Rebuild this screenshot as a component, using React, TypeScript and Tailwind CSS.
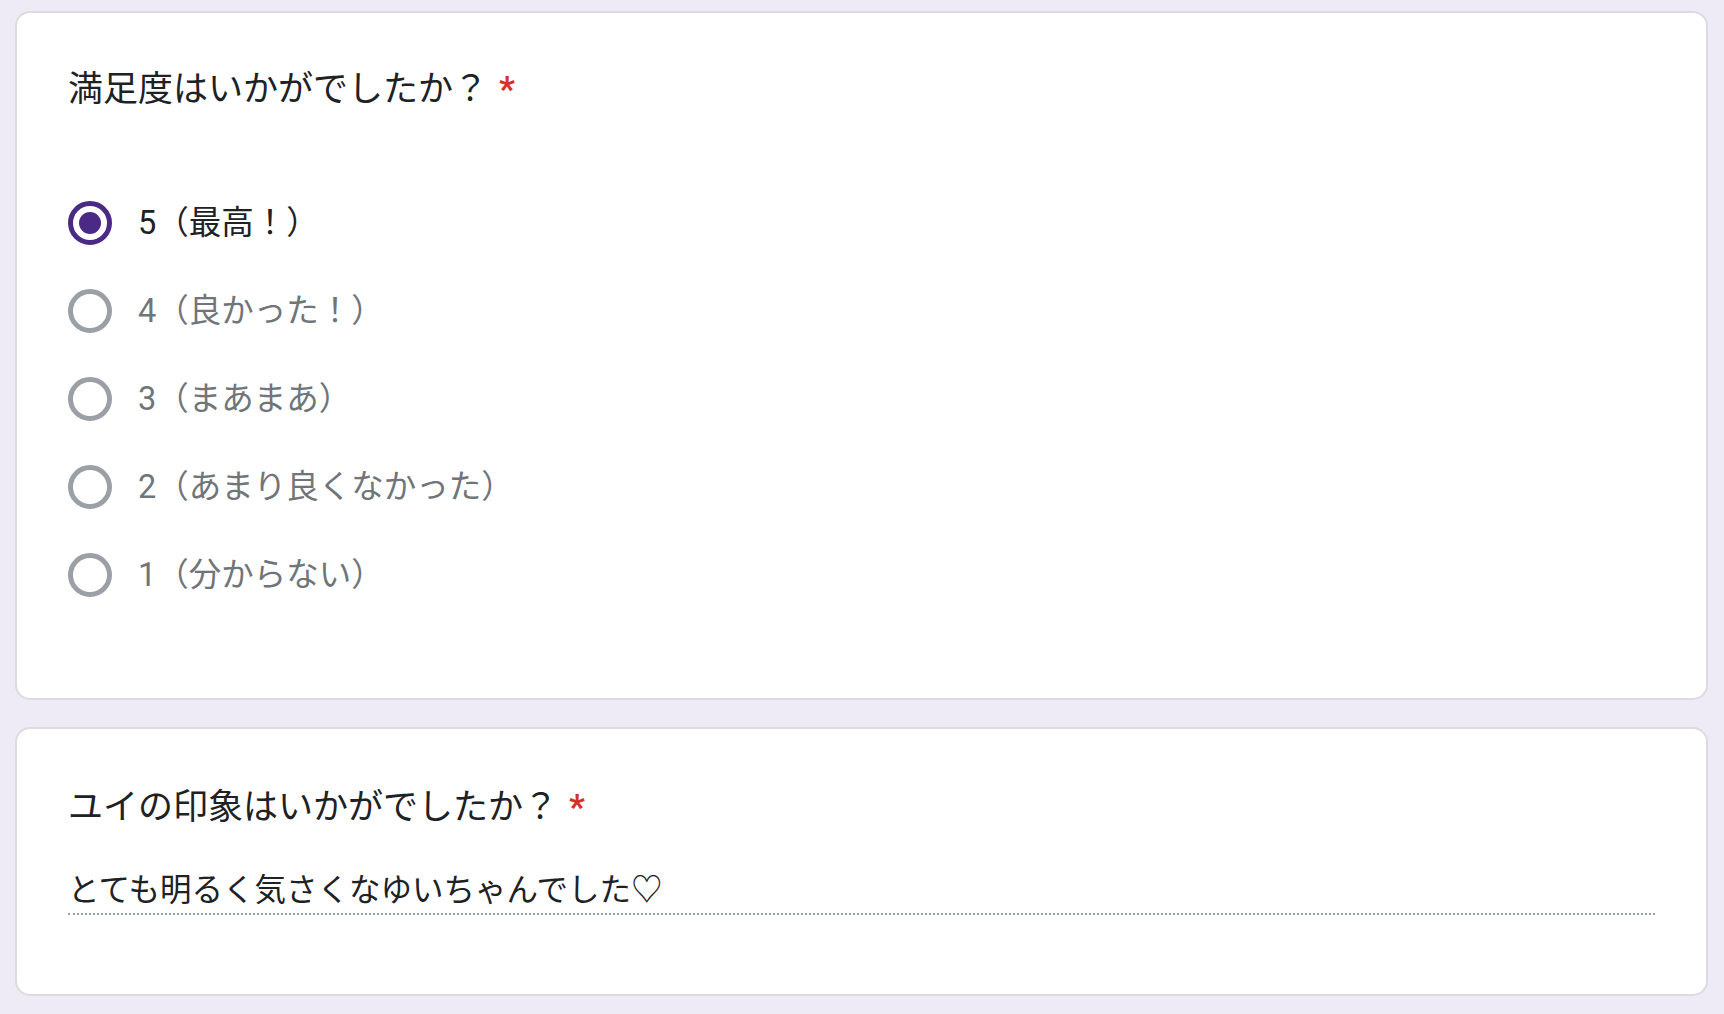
import React from "react";

const options = [
  "5（最高！）",
  "4（良かった！）",
  "3（まあまあ）",
  "2（あまり良くなかった）",
  "1（分からない）",
];

function Radio({ checked }: { checked: boolean }) {
  return (
    <div
      className={`w-[44px] h-[44px] rounded-full border-[5px] flex items-center justify-center shrink-0 ${
        checked ? "border-[#4b2a85]" : "border-[#9aa0a6]"
      }`}
    >
      {checked && <div className="w-[22px] h-[22px] rounded-full bg-[#4b2a85]" />}
    </div>
  );
}

export default function App() {
  const selected = 0;
  return (
    <div
      className="min-h-screen w-full bg-[#eeeaf6] pt-[11px] pl-[15px] pr-[16px] pb-[20px]"
      style={{ fontFamily: 'Roboto, "Noto Sans CJK JP", sans-serif' }}
    >
      <div className="bg-white border-2 border-[#dcdce0] rounded-[15px] h-[689px] pl-[51px] pt-[56px]">
        <div className="flex items-center h-[40px] text-[35px] text-[#202124] leading-none">
          <span>満足度はいかがでしたか？</span>
          <span className="text-[#d93025] ml-[11px] font-bold">*</span>
        </div>
        <div className="mt-[70px] flex flex-col">
          {options.map((label, i) => (
            <label key={label} className="flex items-center h-[88px] gap-[26px]">
              <Radio checked={i === selected} />
              <span
                className={`text-[32.5px] leading-none ${
                  i === selected ? "text-[#202124]" : "text-[#70757a]"
                }`}
              >
                {label}
              </span>
            </label>
          ))}
        </div>
      </div>

      <div className="mt-[27px] bg-white border-2 border-[#dcdce0] rounded-[15px] h-[269px] pl-[51px] pr-[51px] pt-[58px]">
        <div className="flex items-center h-[40px] text-[35px] text-[#202124] leading-none">
          <span>ユイの印象はいかがでしたか？</span>
          <span className="text-[#d93025] ml-[11px] font-bold">*</span>
        </div>
        <div className="mt-[44px] border-b-2 border-dotted border-[#9aa0a6] pb-[2px]">
          <div className="h-[40px] flex items-center text-[31.5px] text-[#202124] leading-none">
            とても明るく気さくなゆいちゃんでした♡
          </div>
        </div>
      </div>
    </div>
  );
}
